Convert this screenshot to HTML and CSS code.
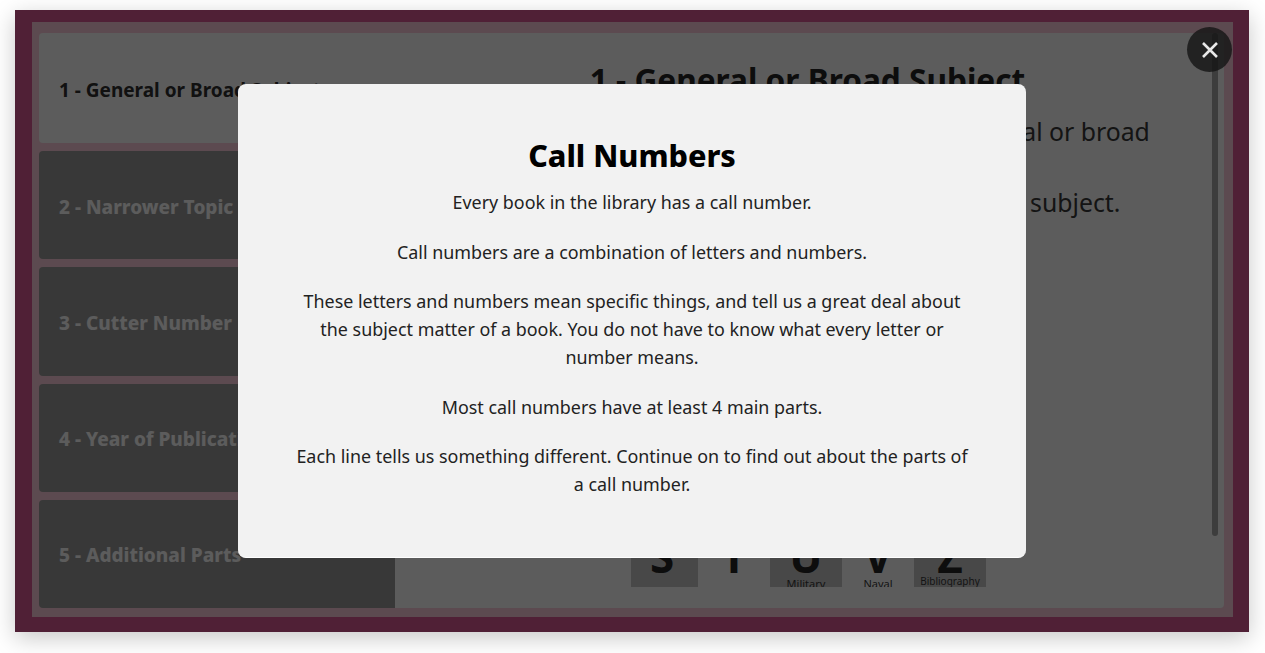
FILE: index.html
```html
<!DOCTYPE html>
<html lang="en">
<head>
  <meta charset="utf-8">
  <title>Call Numbers</title>
  <link rel="stylesheet" href="styles.css">
</head>
<body>
  <div class="frame">
    <div class="ring">
      <div class="lesson">
        <ul class="tabs">
          <li class="tab active">1 - General or Broad Subject</li>
          <li class="tab">2 - Narrower Topic</li>
          <li class="tab">3 - Cutter Number</li>
          <li class="tab">4 - Year of Publication</li>
          <li class="tab">5 - Additional Parts</li>
        </ul>
        <div class="panel">
          <h2>1 - General or Broad Subject</h2>
          <p>The first line of each call number shows a general or broad</p>
          <p>It tells us about a book's very most important subject.</p>
          <div class="letters">
            <div class="letter shaded">S<span class="hidden">Science</span></div>
            <div class="letter">T<span class="tips">Technology</span></div>
            <div class="letter shaded">U<span>Military</span></div>
            <div class="letter">V<span>Naval</span></div>
            <div class="letter shaded">Z<span class="high">Bibliography</span></div>
          </div>
          <div class="scrollbar"></div>
        </div>
      </div>
    </div>
    <div class="overlay">
      <button class="close" aria-label="Close">
        <svg width="18" height="18" viewBox="0 0 18 18"><path d="M2 2 16 16M16 2 2 16"/></svg>
      </button>
      <div class="modal">
        <h1>Call Numbers</h1>
        <p>Every book in the library has a call number.</p>
        <p>Call numbers are a combination of letters and numbers.</p>
        <p>These letters and numbers mean specific things, and tell us a great deal about the subject matter of a book. You do not have to know what every letter or number means.</p>
        <p>Most call numbers have at least 4 main parts.</p>
        <p>Each line tells us something different. Continue on to find out about the parts of a call number.</p>
      </div>
    </div>
  </div>
</body>
</html>
```

FILE: styles.css
```css
* {
  box-sizing: border-box;
}

html, body {
  margin: 0;
  height: 100%;
  background: #fff;
  overflow: hidden;
  font-family: "Noto Sans", "Open Sans", sans-serif;
}

body {
  padding: 10px 16px 21px 15px;
}

.frame {
  position: relative;
  height: 622px;
  background: #c85088;
  padding: 12px 16px 15px 17px;
  box-shadow: 0 6px 22px rgba(0, 0, 0, 0.22);
}

.ring {
  height: 100%;
  background: #e6b9c8;
  padding: 11px 9px 9px 7px;
}

.lesson {
  display: flex;
  height: 100%;
  background: #e6e6e6;
  border-radius: 4px;
}

.tabs {
  flex: 0 0 356px;
  display: flex;
  flex-direction: column;
  gap: 8px;
  margin: 0;
  padding: 0;
  list-style: none;
  background: #e6b9c8;
}

.tab {
  flex: 1;
  display: flex;
  align-items: center;
  padding: 3px 20px 0;
  background: #8c8c8c;
  color: #e6e6e6;
  font-size: 19px;
  font-weight: 800;
  border-radius: 4px 0 0 4px;
  white-space: nowrap;
}

.tab.active {
  flex: 0 0 110px;
  padding-top: 4px;
  background: #e6e6e6;
  color: #2b2b2b;
  font-weight: 700;
}

.panel {
  position: relative;
  flex: 1;
  display: flex;
  flex-direction: column;
  align-items: center;
  padding: 26px 2px 0 0;
  color: #333;
}

.panel h2 {
  margin: 0 2px 15px 0;
  color: #222;
  font-size: 31.6px;
  line-height: 41px;
  white-space: nowrap;
}

.panel p {
  margin: 0 0 38px;
  font-size: 24.8px;
  line-height: 33px;
  white-space: nowrap;
}

.letters {
  display: flex;
  margin-top: auto;
  margin-bottom: 21px;
  height: 80px;
}

.letter {
  width: 72px;
  height: 80px;
  overflow: hidden;
  padding-top: 35px;
  color: #222;
  font-size: 44px;
  font-weight: 700;
  line-height: 28px;
  text-align: center;
}

.letter:first-child {
  width: 67px;
  padding-right: 5px;
}

.letter.shaded {
  background: #b4b4b4;
}

.letter span {
  display: block;
  margin-top: 7px;
  color: #333;
  font-size: 11px;
  font-weight: 400;
  line-height: 14px;
}

.letter .high {
  margin-top: 4px;
  font-size: 10px;
}

.letter .tips {
  margin-top: 15px;
}

.letter .hidden {
  margin-top: 20px;
}

.scrollbar {
  position: absolute;
  top: 0;
  right: 6px;
  bottom: 72px;
  width: 6px;
  background: #989898;
  border-radius: 3px;
}

.overlay {
  position: absolute;
  inset: 0;
  display: flex;
  align-items: center;
  justify-content: center;
  background: rgba(0, 0, 0, 0.6);
}

.close {
  position: absolute;
  top: 17px;
  right: 17px;
  display: flex;
  align-items: center;
  justify-content: center;
  width: 45px;
  height: 45px;
  padding: 0;
  border: 0;
  border-radius: 50%;
  background: rgba(20, 20, 20, 0.8);
}

.close path {
  fill: none;
  stroke: #e8e8e8;
  stroke-width: 2.6;
}

.modal {
  width: 788px;
  height: 474px;
  padding: 51px 56px 0;
  background: #f2f2f2;
  border-bottom: 1px solid #fff;
  border-radius: 8px;
  color: #222;
  font-size: 17.9px;
  line-height: 27.7px;
  text-align: center;
}

.modal h1 {
  margin: 0 0 13px;
  color: #000;
  font-size: 30.5px;
  font-weight: 800;
  line-height: 41px;
}

.modal p {
  margin: 0 0 22px;
}
```
